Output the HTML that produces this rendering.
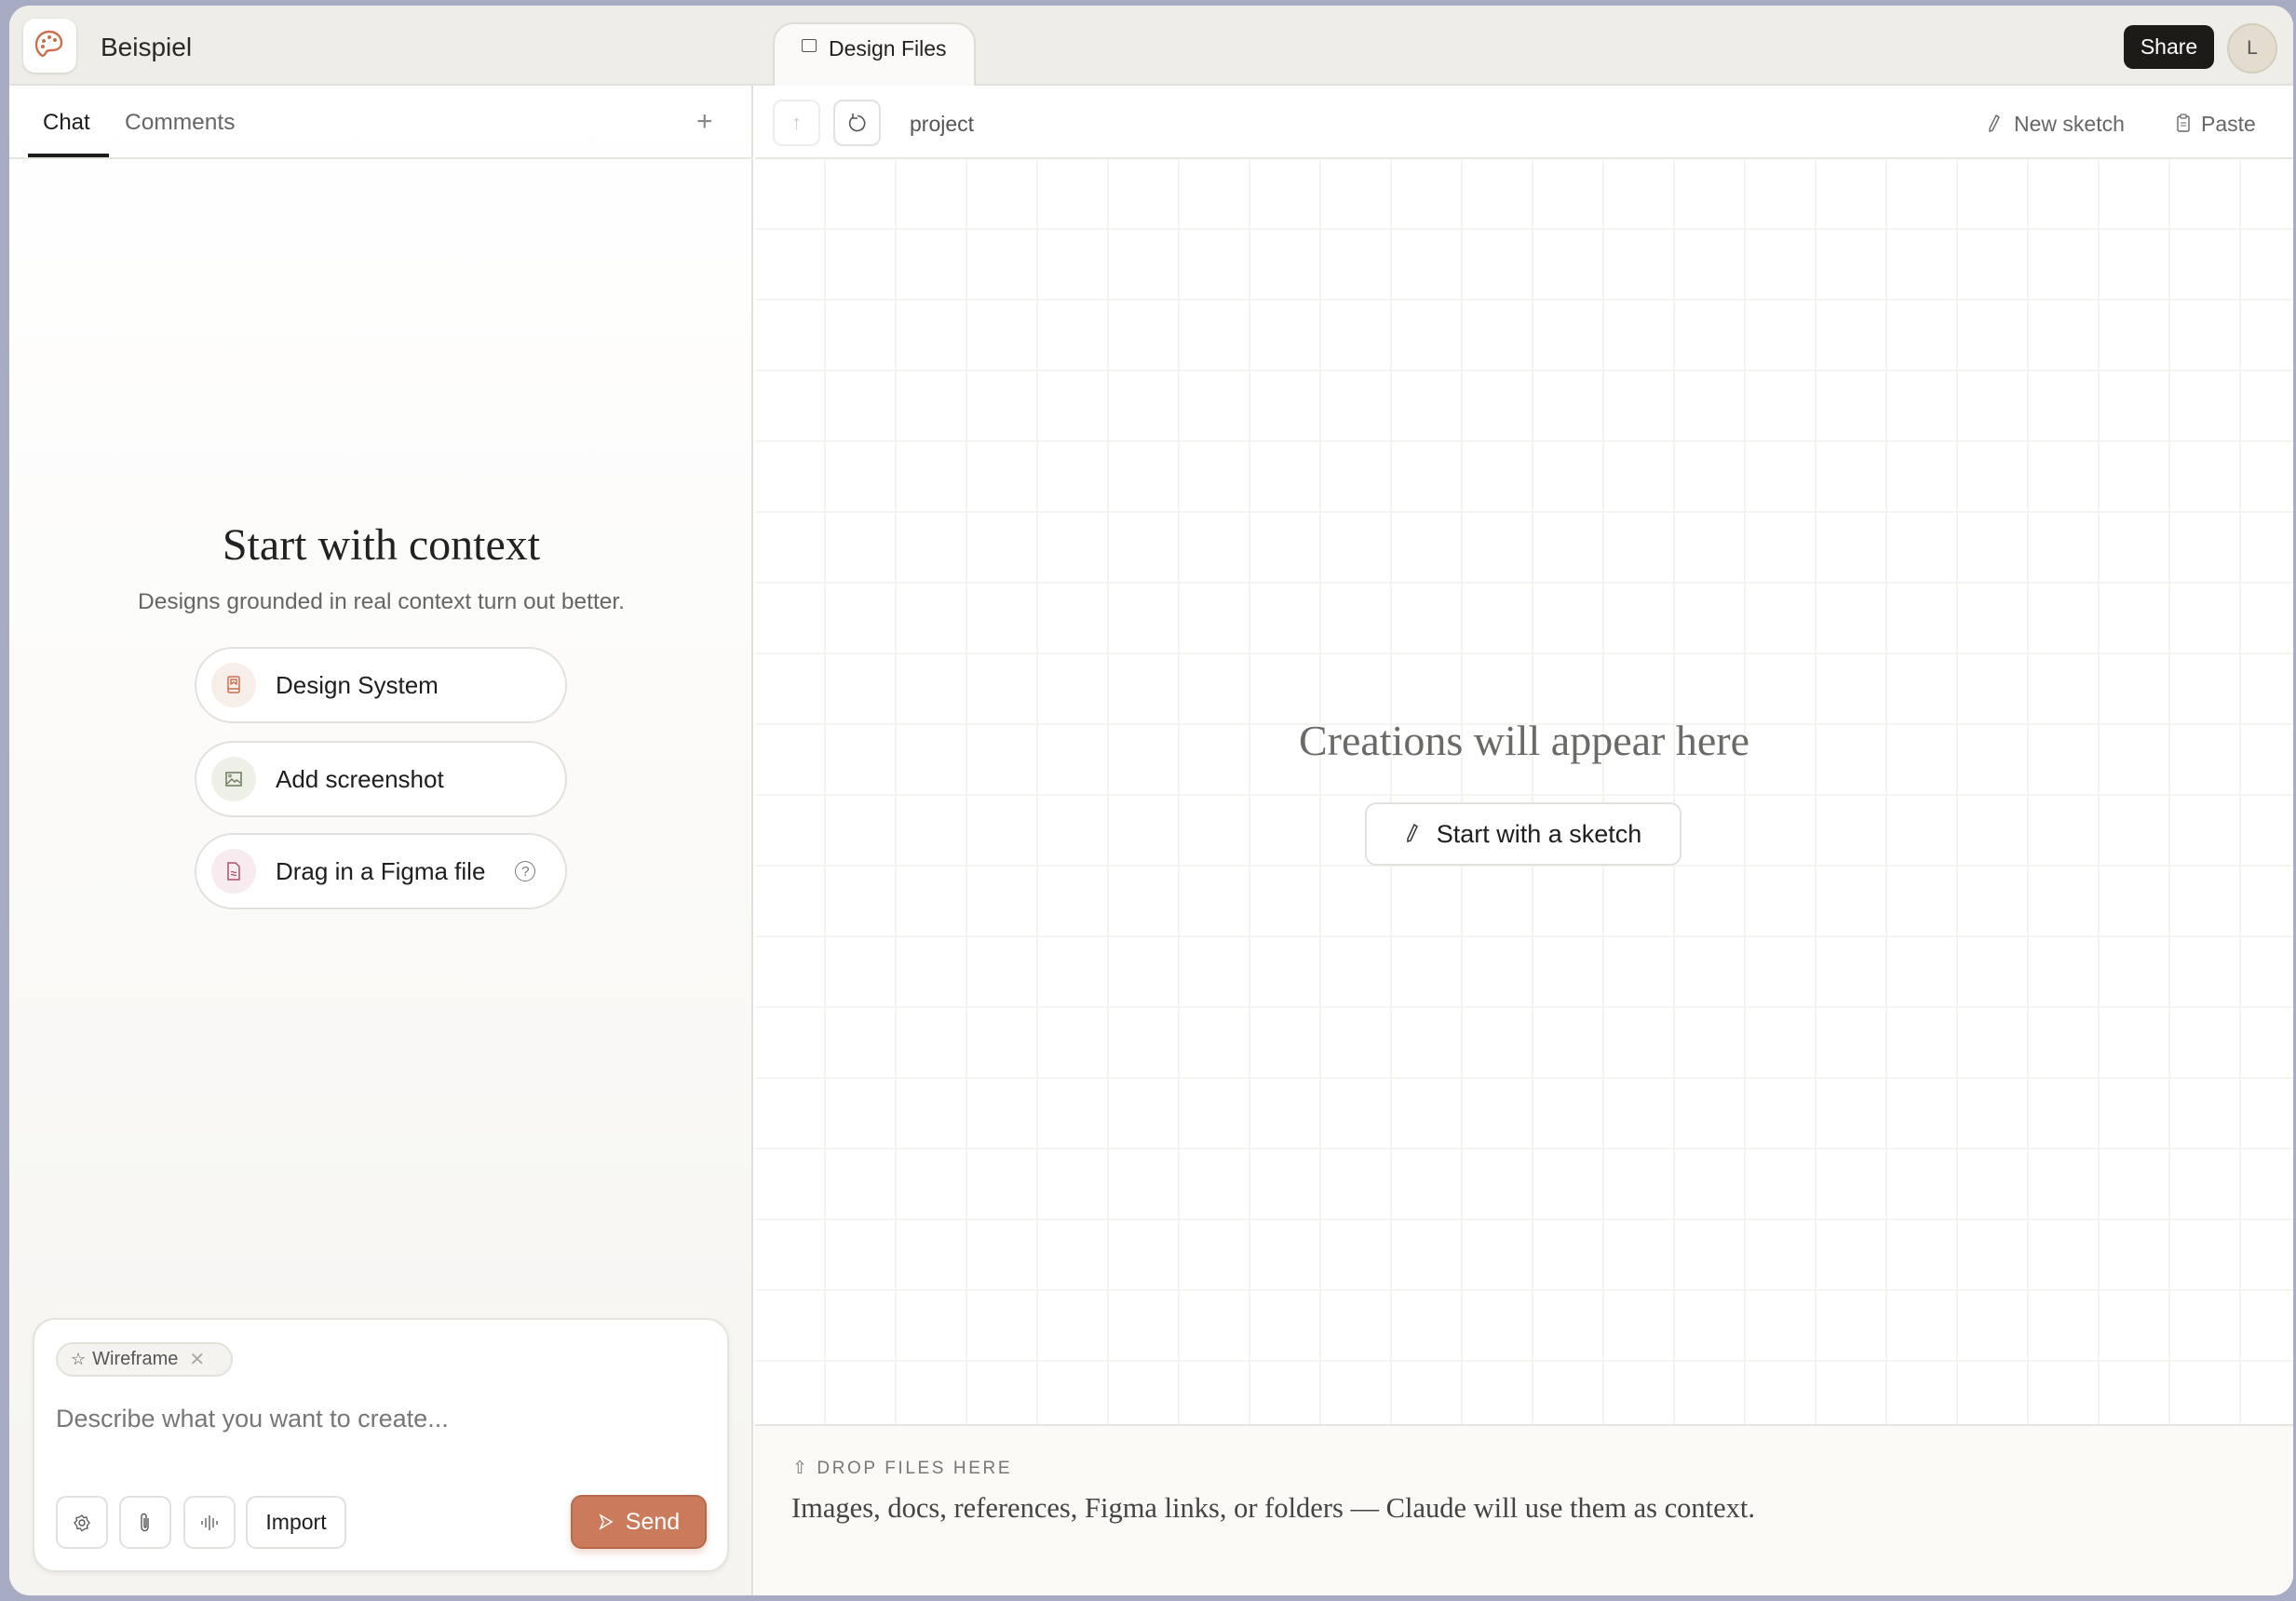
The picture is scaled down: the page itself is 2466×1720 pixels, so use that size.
<!DOCTYPE html>
<html><head><meta charset="utf-8"><style>
*{box-sizing:border-box;margin:0;padding:0}
body{width:2466px;height:1720px;overflow:hidden;background:#a7abc3;font-family:"Liberation Sans",sans-serif;color:#1f1e1c;position:relative}
.a{position:absolute}
.win{left:10px;top:6px;width:2453px;height:1708px;border-radius:22px;overflow:hidden;background:#fff}
.hdr{left:0;top:0;width:2453px;height:86px;background:#eeede8;border-bottom:2px solid #e2e1dc}
.left{left:0;top:86px;width:799px;height:1622px;background:linear-gradient(#fff 0%,#fbfaf8 50%,#f5f4f0 100%);border-right:2px solid #e0dfda}
.grid{left:801px;top:165px;width:1652px;height:1359px;background-color:#fff;background-image:linear-gradient(#f5f4f1 2px,transparent 2px),linear-gradient(90deg,#f5f4f1 2px,transparent 2px);background-size:76px 76px;background-position:-2px -2px}
.btn{border:2px solid #e2e1dd;background:#fff;display:flex;align-items:center}
.serif{font-family:"Liberation Serif",serif}
</style></head><body>
<div class="a win">
 <div class="a hdr"></div>
 <div class="a" style="left:15px;top:14px;width:57px;height:58px;background:#fff;border-radius:13px;box-shadow:0 1px 3px rgba(0,0,0,.15)">
  <svg width="57" height="58" viewBox="0 0 57 58"><path d="M28 14c-8 0-14 6-14 14 0 6 3 9 5 11 2 2 4 0 5-2 1-3 4-3 6-3 7 0 11-3 11-8 0-7-6-12-13-12z" fill="none" stroke="#c96f4f" stroke-width="2.4"/><circle cx="22" cy="24" r="2" fill="#c96f4f"/><circle cx="28" cy="20" r="2" fill="#c96f4f"/><circle cx="34" cy="23" r="2" fill="#c96f4f"/><circle cx="21" cy="30" r="2" fill="#c96f4f"/></svg>
 </div>
 <div class="a" style="left:98px;top:29px;font-size:28px;color:#2a2926">Beispiel</div>
 <div class="a" style="left:820px;top:18px;width:218px;height:70px;background:#fbfaf8;border:2px solid #dedcd6;border-bottom:none;border-radius:22px 22px 0 0"></div>
 <div class="a" style="left:851px;top:36px;width:16px;height:14px;border:1.6px solid #555;border-radius:2px"></div>
 <div class="a" style="left:880px;top:33px;font-size:23px;color:#222">Design Files</div>
 <div class="a" style="left:2271px;top:21px;width:97px;height:47px;background:#1c1b18;border-radius:10px;color:#fff;font-size:23px;display:flex;align-items:center;justify-content:center">Share</div>
 <div class="a" style="left:2382px;top:19px;width:54px;height:54px;border-radius:50%;background:#e3dccf;border:2px solid #d5cdbe;font-size:21px;color:#555;display:flex;align-items:center;justify-content:center">L</div>

 <div class="a left"></div>
 <div class="a" style="left:0;top:163px;width:799px;height:2px;background:#e6e5e0"></div>
 <div class="a" style="left:36px;top:112px;font-size:24px;color:#1e1d1b">Chat</div>
 <div class="a" style="left:20px;top:159px;width:87px;height:4px;background:#1e1d1b"></div>
 <div class="a" style="left:124px;top:112px;font-size:24.5px;color:#666">Comments</div>
 <div class="a" style="left:738px;top:108px;font-size:30px;color:#888">+</div>

 <div class="a serif" style="left:0;top:552px;width:799px;text-align:center;font-size:48px;color:#222">Start with context</div>
 <div class="a" style="left:0;top:627px;width:799px;text-align:center;font-size:24.5px;color:#666">Designs grounded in real context turn out better.</div>

 <div class="a btn" style="left:199px;top:689px;width:400px;height:82px;border-radius:41px">
  <div style="margin-left:16px;width:48px;height:48px;border-radius:50%;background:#f8eee9;display:flex;align-items:center;justify-content:center"><svg width="20" height="22" viewBox="0 0 20 22"><rect x="4" y="2" width="12" height="17" rx="1.5" fill="none" stroke="#c77050" stroke-width="1.5"/><path d="M4 15h12M7 5h6v5l-3-2-3 2z" fill="none" stroke="#c77050" stroke-width="1.4"/></svg></div>
  <span style="margin-left:21px;font-size:26px">Design System</span></div>
 <div class="a btn" style="left:199px;top:790px;width:400px;height:82px;border-radius:41px">
  <div style="margin-left:16px;width:48px;height:48px;border-radius:50%;background:#eef0e8;display:flex;align-items:center;justify-content:center"><svg width="20" height="20" viewBox="0 0 20 20"><rect x="2" y="3" width="16" height="14" fill="none" stroke="#6a7a5e" stroke-width="1.5"/><path d="M3 15l5-5 3 3 2-2 4 3" fill="none" stroke="#6a7a5e" stroke-width="1.4"/><circle cx="6" cy="6.5" r="1.3" fill="none" stroke="#6a7a5e"/></svg></div>
  <span style="margin-left:21px;font-size:26px">Add screenshot</span></div>
 <div class="a btn" style="left:199px;top:889px;width:400px;height:82px;border-radius:41px">
  <div style="margin-left:16px;width:48px;height:48px;border-radius:50%;background:#f7ebef;display:flex;align-items:center;justify-content:center"><svg width="18" height="22" viewBox="0 0 18 22"><path d="M3 2h8l4 4v14H3z" fill="none" stroke="#a85273" stroke-width="1.5"/><path d="M6 12q1.5-1 3 0t3 0M6 15q1.5-1 3 0t3 0" fill="none" stroke="#a85273" stroke-width="1.2"/></svg></div>
  <span style="margin-left:21px;font-size:26px">Drag in a Figma file</span>
  <div style="margin-left:32px;width:22px;height:22px;border-radius:50%;border:1.6px solid #777;font-size:15px;color:#777;display:flex;align-items:center;justify-content:center">?</div></div>

 <div class="a" style="left:25px;top:1410px;width:748px;height:273px;background:#fff;border:2px solid #e4e3de;border-radius:24px;box-shadow:0 2px 6px rgba(0,0,0,.06)"></div>
 <div class="a" style="left:50px;top:1436px;width:190px;height:37px;border:2px solid #e2e1da;background:#f4f3ef;border-radius:19px;display:flex;align-items:center;font-size:20px;color:#555">
  <span style="margin-left:14px;font-size:18px">☆</span><span style="margin-left:7px">Wireframe</span><span style="margin-left:12px;color:#aaa">✕</span></div>
 <div class="a" style="left:50px;top:1503px;font-size:27px;color:#777">Describe what you want to create...</div>
 <div class="a btn" style="left:50px;top:1601px;width:56px;height:57px;border-radius:11px;justify-content:center"><svg width="22" height="22" viewBox="0 0 22 22"><circle cx="11" cy="11" r="3" fill="none" stroke="#555" stroke-width="1.4"/><path d="M11 3l2 2.5 3-.5.5 3L19 11l-2.5 3 .5 3-3 .5-3 2-2-2.5-3 .5-.5-3L3 11l2.5-2.5L5 5.5l3-.5z" fill="none" stroke="#555" stroke-width="1.3"/></svg></div>
 <div class="a btn" style="left:118px;top:1601px;width:56px;height:57px;border-radius:11px;justify-content:center"><svg width="16" height="24" viewBox="0 0 16 24"><path d="M11 7v10a3.5 3.5 0 01-7 0V5a2.5 2.5 0 015 0v11a1 1 0 01-2 0V7" fill="none" stroke="#555" stroke-width="1.4"/></svg></div>
 <div class="a btn" style="left:187px;top:1601px;width:56px;height:57px;border-radius:11px;justify-content:center"><svg width="22" height="20" viewBox="0 0 22 20"><path d="M3 8v4M7 5v10M11 2v16M15 5v10M19 8v4" stroke="#555" stroke-width="1.3"/></svg></div>
 <div class="a btn" style="left:254px;top:1601px;width:108px;height:57px;border-radius:11px;justify-content:center;font-size:23px">Import</div>
 <div class="a" style="left:603px;top:1600px;width:146px;height:58px;border-radius:12px;background:#c97b5b;border:2px solid #b8694b;box-shadow:0 4px 8px rgba(201,123,91,.3);color:#fff;font-size:25px;display:flex;align-items:center;justify-content:center"><svg width="18" height="20" viewBox="0 0 18 20" style="margin-right:12px"><path d="M3 3l12 7-12 7 3-7z" fill="none" stroke="#fff" stroke-width="1.5"/></svg>Send</div>

 <div class="a" style="left:801px;top:86px;width:1652px;height:79px;background:#fff;border-bottom:2px solid #e6e5e0"></div>
 <div class="a btn" style="left:820px;top:101px;width:51px;height:50px;border-radius:10px;border-color:#eeedea;justify-content:center;color:#ccc;font-size:22px">↑</div>
 <div class="a btn" style="left:885px;top:101px;width:51px;height:50px;border-radius:10px;justify-content:center"><svg width="22" height="22" viewBox="0 0 22 22"><path d="M6 5a8 8 0 1 0 5-1.5" fill="none" stroke="#555" stroke-width="1.6"/><path d="M6 1v5h5" fill="none" stroke="#555" stroke-width="1.6"/></svg></div>
 <div class="a" style="left:967px;top:114px;font-size:23px;color:#555">project</div>
 <svg class="a" style="left:2124px;top:116px" width="16" height="22" viewBox="0 0 16 22"><path d="M10 2l3 2-7 14-3 1 0-3z" fill="none" stroke="#666" stroke-width="1.4"/></svg>
 <div class="a" style="left:2153px;top:114px;font-size:23px;color:#666">New sketch</div>
 <svg class="a" style="left:2326px;top:115px" width="18" height="22" viewBox="0 0 18 22"><rect x="3" y="4" width="12" height="16" rx="1.5" fill="none" stroke="#666" stroke-width="1.4"/><rect x="6" y="2" width="6" height="4" rx="1" fill="#fff" stroke="#666" stroke-width="1.2"/><path d="M6 11h6M6 14h6" stroke="#666"/></svg>
 <div class="a" style="left:2354px;top:114px;font-size:23px;color:#666">Paste</div>

 <div class="a grid"></div>
 <div class="a serif" style="left:801px;top:763px;width:1652px;text-align:center;font-size:46px;color:#6b6a66">Creations will appear here</div>
 <div class="a btn" style="left:1456px;top:856px;width:340px;height:68px;border-radius:12px;justify-content:center;font-size:27px"><svg width="16" height="24" viewBox="0 0 16 24" style="margin-right:18px"><path d="M10 2l3 2-7 15-3 1 0-3z" fill="none" stroke="#333" stroke-width="1.5"/></svg>Start with a sketch</div>

 <div class="a" style="left:801px;top:1524px;width:1652px;height:184px;background:#faf9f6;border-top:2px solid #e6e5e0"></div>
 <div class="a" style="left:841px;top:1560px;font-size:19px;color:#777;letter-spacing:2.6px">⇧ DROP FILES HERE</div>
 <div class="a serif" style="left:840px;top:1597px;font-size:30.5px;color:#444">Images, docs, references, Figma links, or folders — Claude will use them as context.</div>
</div>
</body></html>
